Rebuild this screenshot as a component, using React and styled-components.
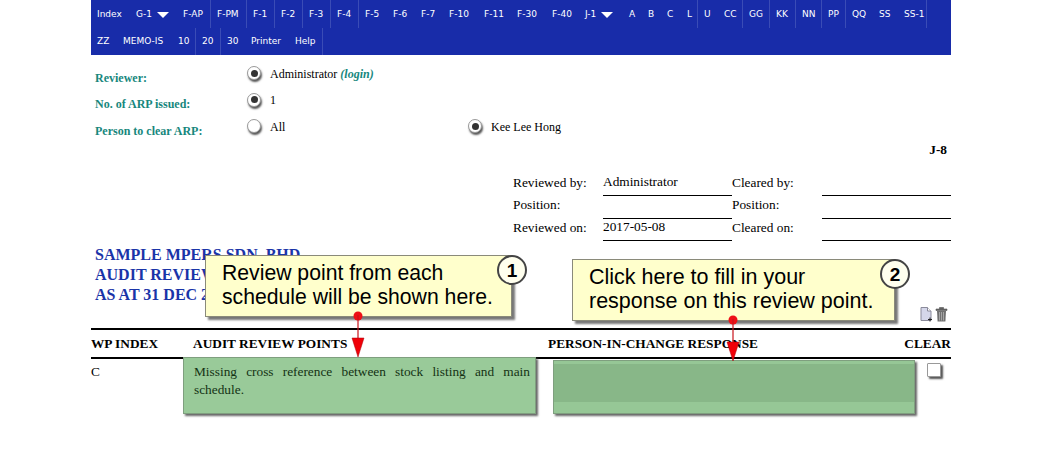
import React from 'react'
import styled, { createGlobalStyle } from 'styled-components'

const GlobalStyle = createGlobalStyle`
  html, body {
    margin: 0;
    background: #fff;
    color: #000;
    font-family: 'Liberation Serif', 'Times New Roman', serif;
    font-size: 12px;
  }
`

const Page = styled.div`
  position: relative;
  width: 860px;
  height: 459px;
  margin: 0 auto;
  overflow: hidden;
`

const Nav = styled.nav`
  display: flex;
  flex-wrap: wrap;
  align-content: flex-start;
  height: 55px;
  background: #182ca9;
`

const NavItem = styled.a`
  display: flex;
  align-items: center;
  gap: 5px;
  box-sizing: border-box;
  width: ${({ $w }) => $w}px;
  height: 27.5px;
  padding-left: 6px;
  color: #fff;
  font-family: 'DejaVu Sans', Verdana, sans-serif;
  font-size: 9px;
  white-space: nowrap;
  border-right: 1px solid ${({ $line }) => ($line ? '#3a4cb6' : 'transparent')};
`

const Caret = styled.span`
  width: 0;
  height: 0;
  margin-top: 3px;
  border-left: 6px solid transparent;
  border-right: 6px solid transparent;
  border-top: 6px solid #fff;
`

const ReviewForm = styled.div`
  display: grid;
  grid-template-columns: 152px 221px 1fr;
  grid-auto-rows: 26.5px;
  padding: 10px 0 0 4px;
  align-items: center;
`

const FieldLabel = styled.div`
  color: #17877d;
  font-weight: bold;
`

const Choice = styled.div`
  display: flex;
  align-items: center;
  gap: 9px;
  padding-bottom: 10px;
`

const ChoiceText = styled.span`
  margin-top: 2px;
`

const Radio = styled.span`
  display: flex;
  align-items: center;
  justify-content: center;
  box-sizing: border-box;
  width: 14px;
  height: 14px;
  border: 1px solid #9a9a9a;
  border-radius: 50%;
  background: #fff;
  box-shadow: 1px 2px 2px #555;

  &::after {
    content: '';
    display: ${({ $on }) => ($on ? 'block' : 'none')};
    width: 7px;
    height: 7px;
    border-radius: 50%;
    background: #333;
  }
`

const LoginLink = styled.i`
  color: #17877d;
  font-weight: bold;
`

const SheetRef = styled.div`
  margin-top: -2px;
  padding-right: 4px;
  text-align: right;
  font-size: 13.33px;
  font-weight: bold;
  line-height: 14px;
`

const SignOff = styled.div`
  display: grid;
  grid-template-columns: 90px 129px 90px 129px;
  grid-auto-rows: 22.5px;
  margin: 17px 0 0 422px;
  font-size: 13.33px;
`

const SignLabel = styled.div`
  padding-top: 2px;
  line-height: 14px;
`

const SignValue = styled.div`
  box-sizing: border-box;
  padding-top: 1px;
  line-height: 14px;
  border-bottom: 1px solid #000;
`

const Heading = styled.h1`
  margin: 4px 0 0;
  padding-left: 4px;
  color: #1a34a8;
  font-size: 16px;
  line-height: 20px;
`

const Tools = styled.div`
  display: flex;
  justify-content: flex-end;
  gap: 2px;
  height: 23px;
  padding: 2px 3px 0 0;
  box-sizing: border-box;
`

const TableHead = styled.div`
  display: grid;
  grid-template-columns: 102px 355px 1fr auto;
  align-items: center;
  box-sizing: border-box;
  height: 31px;
  border-top: 2px solid #000;
  border-bottom: 2px solid #000;
  font-size: 13.33px;
  font-weight: bold;
`

const ReviewRow = styled.div`
  display: grid;
  grid-template-columns: 92px 353px 379px 15px;
  margin-top: -2px;
  font-size: 13.33px;
`

const IndexCell = styled.div`
  padding-top: 8px;
  line-height: 14px;
`

const PointBox = styled.div`
  box-sizing: border-box;
  height: 57px;
  padding: 5px 5px 0 10px;
  background: #99ca99;
  color: #143214;
  line-height: 18px;
  text-align: justify;
  border: 1px solid #7f9f7f;
  box-shadow: 2px 2px 2px #666;
`

const ResponseBox = styled.div`
  box-sizing: border-box;
  width: 362px;
  height: 54px;
  margin: 3px 0 0 17px;
  padding: 3px 0 11px;
  background: #96c796;
  border: 1px solid #7f9f7f;
  box-shadow: 2px 2px 2px #666;

  &::before {
    content: '';
    display: block;
    height: 100%;
    background: #88b788;
  }
`

const ClearBox = styled.span`
  display: block;
  box-sizing: border-box;
  width: 14px;
  height: 14px;
  margin: 6px 0 0 12px;
  border: 1px solid #999;
  border-radius: 1px;
  background: #fff;
  box-shadow: 2px 2px 2px #555;
`

const Callout = styled.div`
  position: absolute;
  left: ${({ $x }) => $x}px;
  top: ${({ $y }) => $y}px;
  box-sizing: border-box;
  width: ${({ $w }) => $w}px;
  height: 62px;
  padding: 5px 0 0 16px;
  background: #ffffcc;
  border: 1px solid #8a8a7a;
  box-shadow: 3px 3px 2px #777;
  color: #000;
  font-family: 'Liberation Sans', Arial, sans-serif;
  font-size: ${({ $size }) => $size}px;
  line-height: 24px;
`

const Badge = styled.span`
  position: absolute;
  top: -1px;
  right: -16px;
  display: flex;
  align-items: center;
  justify-content: center;
  box-sizing: border-box;
  width: 30px;
  height: 30px;
  border: 2px solid #444;
  border-radius: 50%;
  background: #ffffee;
  font-size: 19px;
  font-weight: bold;
  line-height: 1;
`

const Pointer = styled.svg`
  position: absolute;
  left: ${({ $x }) => $x}px;
  top: ${({ $y }) => $y}px;
  overflow: visible;
`

const navRows = [
  [
    ['Index', 39], ['G-1', 47, false, true], ['F-AP', 34, true], ['F-PM', 36, true],
    ['F-1', 28, true], ['F-2', 28, true], ['F-3', 28, true], ['F-4', 28, true],
    ['F-5', 28], ['F-6', 28], ['F-7', 28], ['F-10', 35], ['F-11', 33], ['F-30', 35],
    ['F-40', 33], ['J-1', 44, false, true], ['A', 19], ['B', 19], ['C', 20], ['L', 17, true],
    ['U', 20], ['CC', 25, true], ['GG', 27, true], ['KK', 26, true], ['NN', 26, true],
    ['PP', 24, true], ['QQ', 27], ['SS', 25], ['SS-1', 29, true]
  ],
  [
    ['ZZ', 26], ['MEMO-IS', 55], ['10', 24, true], ['20', 25, true], ['30', 24],
    ['Printer', 44], ['Help', 34, true]
  ]
]

const signOffRows = [
  ['Reviewed by:', 'Administrator', 'Cleared by:'],
  ['Position:', '', 'Position:'],
  ['Reviewed on:', '2017-05-08', 'Cleared on:']
]

const NewDocIcon = () => (
  <svg width="13" height="15" viewBox="0 0 13 15">
    <path d="M1 .5h6.5L11 4v9.5H1z" fill="#d5d7ea" stroke="#8a8a9a" />
    <path d="M7.5.5V4H11" fill="#fff" stroke="#8a8a9a" />
    <path d="M10 10.5v4M8 12.5h4" stroke="#222" />
  </svg>
)

const TrashIcon = () => (
  <svg width="13" height="15" viewBox="0 0 13 15">
    <path d="M1 2h11v1.5H1zM4.5 2V.5h4V2" fill="#666" stroke="#555" strokeWidth=".6" />
    <path d="M2 4h9l-.6 10.5H2.6z" fill="#707070" />
    <path d="M4.5 5v8.5M6.5 5v8.5M8.5 5v8.5" stroke="#a5a5a5" />
  </svg>
)

const ArrowPointer = ({ x, y }) => (
  <Pointer $x={x} $y={y} width="14" height="48" viewBox="0 0 14 48">
    <circle cx="7" cy="5" r="4.5" fill="#ee1016" />
    <path d="M7 4v30" stroke="#c8141c" strokeWidth="1.2" />
    <path d="M1 27h12L7 46z" fill="#f00008" stroke="#a80008" strokeWidth=".5" />
  </Pointer>
)

export default function App() {
  return (
    <Page>
      <GlobalStyle />
      <Nav>
        {navRows.flat().map(([label, width, line, caret]) => (
          <NavItem key={label} $w={width} $line={line}>
            {label}
            {caret && <Caret />}
          </NavItem>
        ))}
      </Nav>

      <ReviewForm>
        <FieldLabel>Reviewer:</FieldLabel>
        <Choice>
          <Radio $on />
          <ChoiceText>
            Administrator <LoginLink>(login)</LoginLink>
          </ChoiceText>
        </Choice>
        <div />
        <FieldLabel>No. of ARP issued:</FieldLabel>
        <Choice>
          <Radio $on />
          <ChoiceText>1</ChoiceText>
        </Choice>
        <div />
        <FieldLabel>Person to clear ARP:</FieldLabel>
        <Choice>
          <Radio />
          <ChoiceText>All</ChoiceText>
        </Choice>
        <Choice>
          <Radio $on />
          <ChoiceText>Kee Lee Hong</ChoiceText>
        </Choice>
      </ReviewForm>

      <SheetRef>J-8</SheetRef>

      <SignOff>
        {signOffRows.map(([left, value, right]) => (
          <React.Fragment key={left}>
            <SignLabel>{left}</SignLabel>
            <SignValue>{value}</SignValue>
            <SignLabel>{right}</SignLabel>
            <SignValue />
          </React.Fragment>
        ))}
      </SignOff>

      <Heading>
        SAMPLE MPERS SDN. BHD.
        <br />
        AUDIT REVIEW POINTS
        <br />
        AS AT 31 DEC 2016
      </Heading>

      <Tools>
        <NewDocIcon />
        <TrashIcon />
      </Tools>

      <TableHead>
        <div>WP INDEX</div>
        <div>AUDIT REVIEW POINTS</div>
        <div>PERSON-IN-CHANGE RESPONSE</div>
        <div>CLEAR</div>
      </TableHead>

      <ReviewRow>
        <IndexCell>C</IndexCell>
        <PointBox>Missing cross reference between stock listing and main schedule.</PointBox>
        <ResponseBox />
        <ClearBox />
      </ReviewRow>

      <Callout $x={114} $y={255} $w={307} $size={21.2}>
        Review point from each
        <br />
        schedule will be shown here.
        <Badge>1</Badge>
      </Callout>
      <ArrowPointer x={260} y={311} />

      <Callout $x={481} $y={259} $w={323} $size={21.5}>
        Click here to fill in your
        <br />
        response on this review point.
        <Badge>2</Badge>
      </Callout>
      <ArrowPointer x={635} y={315} />
    </Page>
  )
}
